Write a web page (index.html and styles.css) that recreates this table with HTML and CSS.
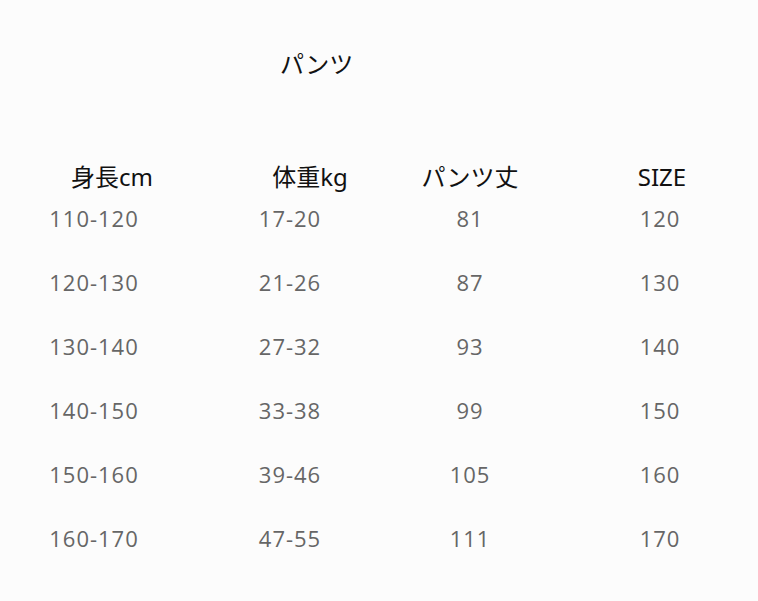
FILE: index.html
```html
<!DOCTYPE html>
<html lang="ja">
<head>
<meta charset="utf-8">
<link rel="stylesheet" href="styles.css">
</head>
<body>
<div class="page">
  <h1 class="title">パンツ</h1>
  <div class="table">
    <div class="th c1">身長cm</div>
    <div class="th c2">体重kg</div>
    <div class="th c3">パンツ丈</div>
    <div class="th c4">SIZE</div>

    <div class="td c1">110-120</div><div class="td c2">17-20</div><div class="td c3">81</div><div class="td c4">120</div>
    <div class="td c1">120-130</div><div class="td c2">21-26</div><div class="td c3">87</div><div class="td c4">130</div>
    <div class="td c1">130-140</div><div class="td c2">27-32</div><div class="td c3">93</div><div class="td c4">140</div>
    <div class="td c1">140-150</div><div class="td c2">33-38</div><div class="td c3">99</div><div class="td c4">150</div>
    <div class="td c1">150-160</div><div class="td c2">39-46</div><div class="td c3">105</div><div class="td c4">160</div>
    <div class="td c1">160-170</div><div class="td c2">47-55</div><div class="td c3">111</div><div class="td c4">170</div>
  </div>
</div>
</body>
</html>
```

FILE: styles.css
```css
html, body {
  margin: 0;
  padding: 0;
  background: #fcfcfc;
}
.page {
  width: 758px;
  height: 601px;
  overflow: hidden;
}
.title {
  margin: 48px 0 0 0;
  padding-left: 280px;
  height: 30px;
  line-height: 30px;
  font-family: "Noto Sans CJK JP", sans-serif;
  font-size: 24px;
  font-weight: 400;
  color: #111;
}
.table {
  margin-top: 90px;
  display: grid;
  grid-template-columns: 188px 204px 156px 200px;
  grid-template-rows: 18px repeat(6, 64px);
}
.th {
  font-family: "Noto Sans", "Noto Sans CJK JP", sans-serif;
  font-size: 24px;
  line-height: 18px;
  color: #111;
  text-align: center;
  white-space: nowrap;
}
.th.c1 { padding-left: 36px; }
.th.c2 { padding-left: 40px; }
.th.c4 { padding-left: 28px; }
.td {
  font-family: "Open Sans", sans-serif;
  font-size: 22px;
  letter-spacing: 1px;
  line-height: 64px;
  color: #666;
  text-align: center;
  white-space: nowrap;
}
.td.c4 { padding-left: 24px; }
```
